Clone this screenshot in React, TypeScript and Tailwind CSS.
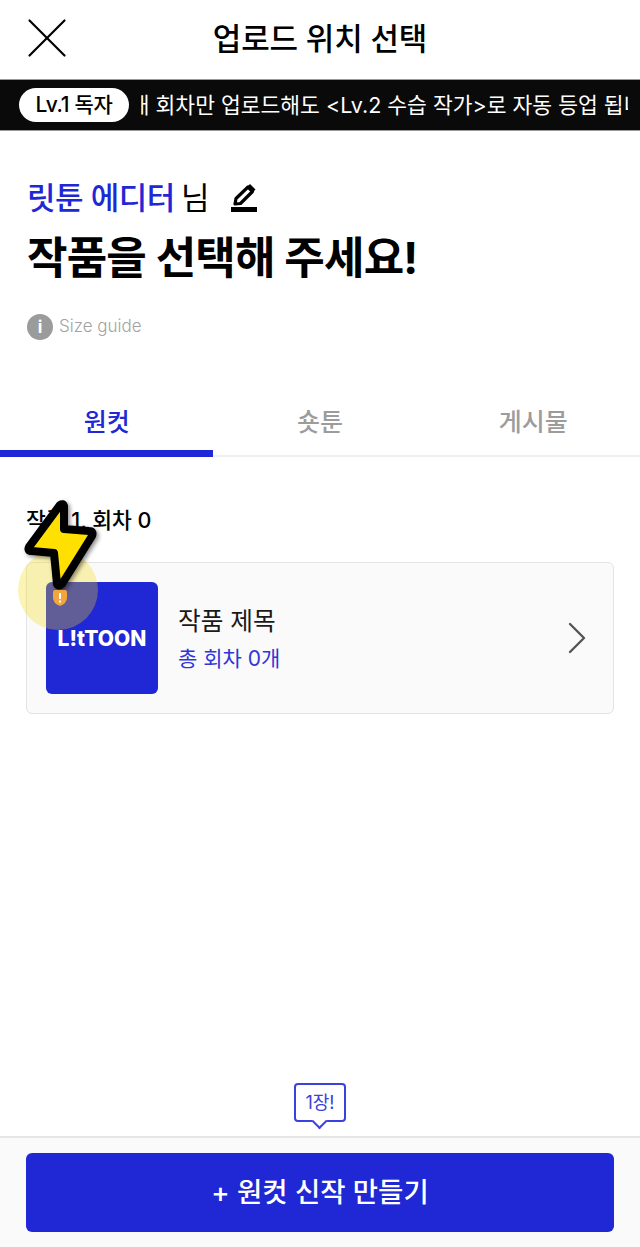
import { ChevronRight, X } from "lucide-react";

const font = "font-['Inter','Noto_Sans_CJK_KR',sans-serif]";

const tabs = [
  { label: "원컷", active: true },
  { label: "숏툰", active: false },
  { label: "게시물", active: false },
];

function PencilIcon() {
  return (
    <svg width="26" height="30" viewBox="0 0 26 30" className="block">
      <rect x="0" y="24" width="26" height="5" fill="#000" />
      <path
        d="M4 21 L5 15.5 L17 4 L21.5 8.5 L9.5 20.5 Z"
        fill="none"
        stroke="#000"
        strokeWidth="3.2"
        strokeLinejoin="round"
      />
      <path d="M19 1 L24.5 6.5 L22 9 L16.5 3.5 Z" fill="#000" />
    </svg>
  );
}

function TouchOverlay() {
  return (
    <div className="absolute left-[18px] top-[500px] h-[130px] w-[82px]">
      <div className="absolute bottom-0 left-0 h-[80px] w-[80px] rounded-full bg-[#f5d90a]/30" />
      <svg width="76" height="92" viewBox="0 0 76 92" className="absolute left-[4px] top-0 drop-shadow-[2px_2px_2px_rgba(0,0,0,0.45)]">
        <path
          d="M38 5 L7 47 Q5 51 10 51 L32 53 L35 84 Q37 87 40 84 L70 36 Q72 31 67 31 L42 29 L42 6 Q41 3 38 5 Z"
          fill="#ffe000"
          stroke="#000"
          strokeWidth="8"
          strokeLinejoin="round"
        />
      </svg>
    </div>
  );
}

export default function App() {
  return (
    <div className={`${font} relative flex h-[1247px] w-[640px] flex-col overflow-hidden bg-white text-black`}>
      {/* Header */}
      <header className="relative flex h-[79px] shrink-0 items-center justify-center">
        <X className="absolute left-[12px] top-[3px]" size={70} strokeWidth={2.2} absoluteStrokeWidth />
        <h1 className="text-[31px] font-medium tracking-[-0.2px]">업로드 위치 선택</h1>
      </header>

      {/* Level banner */}
      <div className="flex h-[52px] shrink-0 items-center border-y border-[#999] bg-[#0a0a0a] pl-[19px] pr-[12px]">
        <span className="flex h-[34px] w-[110px] shrink-0 items-center justify-center rounded-full bg-white text-[21px] font-medium tracking-[-0.3px] text-black">
          Lv.1 독자
        </span>
        <div className="ml-[12px] flex-1 overflow-hidden">
          <p className="ml-[-20px] whitespace-nowrap text-[21.5px] text-white">1개 회차만 업로드해도 &lt;Lv.2 수습 작가&gt;로 자동 등업 됩니다</p>
        </div>
      </div>

      {/* Greeting */}
      <section className="flex shrink-0 flex-col px-[27px] pt-[46px]">
        <div className="flex h-[42px] items-center">
          <span className="text-[31px] font-medium tracking-[-0.5px] text-[#2027d4]">릿툰 에디터</span>
          <span className="ml-[6px] text-[31px]">님</span>
          <span className="ml-[22px]">
            <PencilIcon />
          </span>
        </div>
        <h2 className="mt-[9px] text-[44px] font-bold leading-[60px] tracking-[-0.8px]">작품을 선택해 주세요!</h2>
        <div className="mt-[26px] flex items-center gap-[6px]">
          <span className="flex h-[26px] w-[26px] items-center justify-center rounded-full bg-[#9b9b9b] text-[17px] font-bold leading-none text-white">
            i
          </span>
          <span className="text-[17px] font-light text-[#a3a3a3]">Size guide</span>
        </div>
      </section>

      {/* Tabs */}
      <nav className="mt-[42px] flex h-[75px] shrink-0 border-b-2 border-[#f0f0f0]">
        {tabs.map((tab) => (
          <div
            key={tab.label}
            className={
              tab.active
                ? "mb-[-2px] flex-1 border-b-[7px] border-[#2027d4] pt-[22px] text-center text-[25px] font-medium leading-[36px] text-[#2027d4]"
                : "flex-1 pt-[22px] text-center text-[25px] font-medium leading-[36px] text-[#9c9c9c]"
            }
          >
            {tab.label}
          </div>
        ))}
      </nav>

      {/* Series list */}
      <main className="flex-1 px-[26px] pt-[47px]">
        <p className="text-[21.5px] font-medium leading-[32px]">작품 1, 회차 0</p>
        <div className="mt-[26px] flex h-[152px] items-center rounded-[6px] border border-[#e3e3e3] bg-[#fafafa] pl-[19px] pr-[8px]">
          <div className="relative flex h-[112px] w-[112px] shrink-0 items-center justify-center rounded-[6px] bg-[#2027d4] pt-[1px] text-[21px] font-extrabold text-white">
            L!tTOON
          </div>
          <div className="ml-[20px] flex-1">
            <p className="text-[24.7px] leading-[36px] text-[#1a1a1a]">작품 제목</p>
            <p className="mt-[5px] text-[21px] leading-[30px] text-[#2f36d8]">총 회차 0개</p>
          </div>
          <ChevronRight className="text-[#555]" size={56} strokeWidth={2.4} absoluteStrokeWidth />
        </div>
      </main>

      {/* Bottom action */}
      <footer className="relative flex h-[111px] shrink-0 border-t-2 border-[#e6e6e6] bg-[#fafafa] px-[26px] pt-[15px]">
        <button className="flex h-[79px] w-full items-center justify-center rounded-[6px] bg-[#2027d4] text-[27.5px] font-medium text-white">
          + 원컷 신작 만들기
        </button>
        <div className="absolute left-[294px] top-[-55px] flex h-[39px] w-[52px] items-center justify-center rounded-[4px] border-2 border-[#3a41dc] bg-white text-[18px] text-[#3a41dc]">
          1장!
          <span className="absolute bottom-[-7px] left-[18px] h-[11px] w-[11px] rotate-45 border-b-2 border-r-2 border-[#3a41dc] bg-white" />
        </div>
      </footer>

      {/* Touch indicator + warning badge */}
      <TouchOverlay />
      <svg width="16" height="18" viewBox="0 0 16 18" className="absolute left-[52px] top-[589px]">
        <path d="M1 3 Q1 1 3 1 H13 Q15 1 15 3 V9 Q15 14 8 17 Q1 14 1 9 Z" fill="#f2a53a" />
        <rect x="7" y="4" width="2" height="6" fill="#fff" />
        <rect x="7" y="11.5" width="2" height="2" fill="#fff" />
      </svg>
    </div>
  );
}
